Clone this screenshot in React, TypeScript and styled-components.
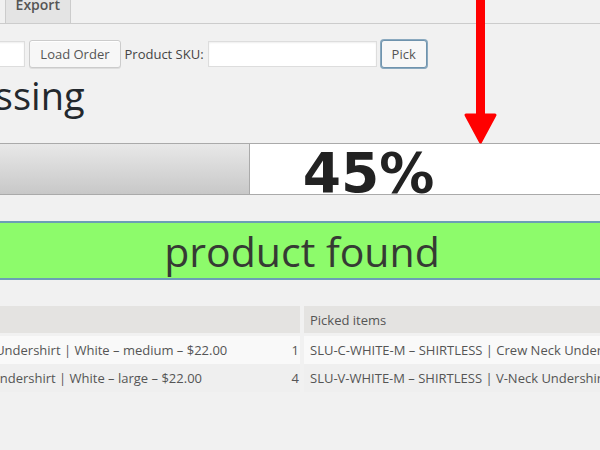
import React from "react";
import styled, { createGlobalStyle } from "styled-components";

const GlobalStyle = createGlobalStyle`
  html, body {
    margin: 0;
    padding: 0;
    background: #f1f1f1;
    overflow: hidden;
  }
  body {
    font-family: "Open Sans", "Liberation Sans", sans-serif;
    font-size: 13px;
    color: #444;
  }
`;

const Viewport = styled.div`
  position: relative;
  width: 600px;
  height: 450px;
  overflow: hidden;
`;

// the screenshot is a crop of a wider admin page, so the page is shifted left
const Page = styled.div`
  margin-left: -265px;
  width: 1134px;
`;

const TabBar = styled.nav`
  display: flex;
  gap: 7px;
  margin-top: -14px;
  padding-left: 149px;
  border-bottom: 1px solid #ccc;
`;

const Tab = styled.a<{ $active?: boolean }>`
  display: block;
  padding: 6px 10px;
  font-size: 14px;
  line-height: 24px;
  font-weight: 600;
  color: #555;
  text-decoration: none;
  background: ${(p) => (p.$active ? "#f1f1f1" : "#e4e4e4")};
  border: 1px solid #ccc;
  border-bottom: none;
`;

const Toolbar = styled.div`
  display: flex;
  align-items: center;
  gap: 4px;
  margin-top: 16px;
  padding-left: 39px;
`;

const Label = styled.label`
  font-size: 13px;
  color: #444;
  white-space: nowrap;
`;

const Input = styled.input<{ $width: number }>`
  box-sizing: border-box;
  width: ${(p) => p.$width}px;
  height: 26px;
  padding: 3px 5px;
  border: 1px solid #ddd;
  background: #fff;
  box-shadow: inset 0 1px 2px rgba(0, 0, 0, 0.07);
  font-family: inherit;
  font-size: 13px;
  outline: none;
`;

const Button = styled.button<{ $focus?: boolean }>`
  box-sizing: border-box;
  height: 28px;
  padding: 0 10px;
  font-family: "Open Sans", "Liberation Sans", sans-serif;
  font-size: 13px;
  line-height: 26px;
  color: #555;
  background: #f7f7f7;
  border: 1px solid ${(p) => (p.$focus ? "#6f93ad" : "#ccc")};
  border-radius: 3px;
  box-shadow: ${(p) =>
    p.$focus
      ? "0 0 0 1px #8aa9bf, 0 1px 0 #ccc"
      : "inset 0 1px 0 #fff, 0 1px 0 rgba(0,0,0,.08)"};
  cursor: pointer;
`;

const Heading = styled.h1`
  margin: 4px 0 0;
  padding-left: 44px;
  font-size: 38px;
  font-weight: 400;
  line-height: 46px;
  color: #23282d;
`;

const Progress = styled.div`
  display: flex;
  margin: 25px 0 0 8px;
  height: 50px;
  border-top: 1px solid #aaa;
  border-bottom: 1px solid #aaa;
  background: #fff;
`;

const ProgressFill = styled.div`
  box-sizing: border-box;
  background: linear-gradient(#e8e8e8, #c8c8c8);
  border-right: 1px solid #aaa;
`;

const ProgressLabel = styled.div`
  flex: 1;
  padding-left: 53px;
  font-family: "DejaVu Sans", "Liberation Sans", sans-serif;
  font-weight: bold;
  font-size: 55px;
  line-height: 58px;
  color: #222;
`;

const Notice = styled.div`
  margin-top: 26px;
  height: 55px;
  background: #8dfb6b;
  border-top: 2px solid #6b9eb6;
  border-bottom: 2px solid #6b9eb6;
  text-align: center;
  font-size: 41px;
  line-height: 56px;
  color: #363a34;
`;

const Tables = styled.div`
  display: grid;
  grid-template-columns: 565px 1fr;
  gap: 4px;
  margin-top: 26px;
`;

const Table = styled.table`
  width: 100%;
  border-collapse: separate;
  border-spacing: 0;
  font-size: 13px;
  color: #555;
`;

const Th = styled.th`
  height: 27px;
  padding: 0 6px;
  background: #e4e3e1;
  border-bottom: 3px solid #f1f1f1;
  text-align: left;
  font-weight: 400;
  white-space: nowrap;
`;

const Tr = styled.tr<{ $alt?: boolean }>`
  background: ${(p) => (p.$alt ? "#efefef" : "#f9f9f9")};
`;

const Td = styled.td<{ $num?: boolean }>`
  height: 28px;
  padding: ${(p) => (p.$num ? "0 1px 0 6px" : "0 6px")};
  text-align: ${(p) => (p.$num ? "right" : "left")};
  white-space: nowrap;
  overflow: hidden;
`;

const Arrow = styled.svg`
  position: absolute;
  left: 462px;
  top: 0;
`;

const toPick = [
  { name: "SLU-C-WHITE-M – SHIRTLESS | Crew Neck Undershirt | White – medium – $22.00", qty: 1 },
  { name: "SLU-C-WHITE-L – SHIRTLESS | Crew Neck Undershirt | White – large – $22.00", qty: 4 },
];

const picked = [
  "SLU-C-WHITE-M – SHIRTLESS | Crew Neck Undershirt | White – medium – $22.00",
  "SLU-V-WHITE-M – SHIRTLESS | V-Neck Undershirt | White – medium – $22.00",
];

export default function App() {
  const percent = 45;
  return (
    <Viewport>
      <GlobalStyle />
      <Page>
        <TabBar>
          <Tab $active>Order Picking</Tab>
          <Tab>Export</Tab>
        </TabBar>
        <Toolbar>
          <Label>Order number:</Label>
          <Input $width={156} type="text" />
          <Button>Load Order</Button>
          <Label>Product SKU:</Label>
          <Input $width={169} type="text" />
          <Button $focus>Pick</Button>
        </Toolbar>
        <Heading>Order Processing</Heading>
        <Progress>
          <ProgressFill style={{ width: `${percent}%` }} />
          <ProgressLabel>{percent}%</ProgressLabel>
        </Progress>
        <Notice>product found</Notice>
        <Tables>
          <Table>
            <thead>
              <tr>
                <Th colSpan={2}>Items to pick</Th>
              </tr>
            </thead>
            <tbody>
              {toPick.map((item, i) => (
                <Tr key={item.name} $alt={i % 2 === 1}>
                  <Td>{item.name}</Td>
                  <Td $num>{item.qty}</Td>
                </Tr>
              ))}
            </tbody>
          </Table>
          <Table>
            <thead>
              <tr>
                <Th>Picked items</Th>
              </tr>
            </thead>
            <tbody>
              {picked.map((name, i) => (
                <Tr key={name} $alt={i % 2 === 1}>
                  <Td>{name}</Td>
                </Tr>
              ))}
            </tbody>
          </Table>
        </Tables>
      </Page>
      <Arrow width="38" height="146" viewBox="0 0 38 146">
        <rect x="14" y="0" width="9" height="118" fill="#f00" />
        <path d="M4 115 L33 115 L18.5 142 Z" fill="#f00" stroke="#f00" strokeWidth="3" strokeLinejoin="round" />
      </Arrow>
    </Viewport>
  );
}
